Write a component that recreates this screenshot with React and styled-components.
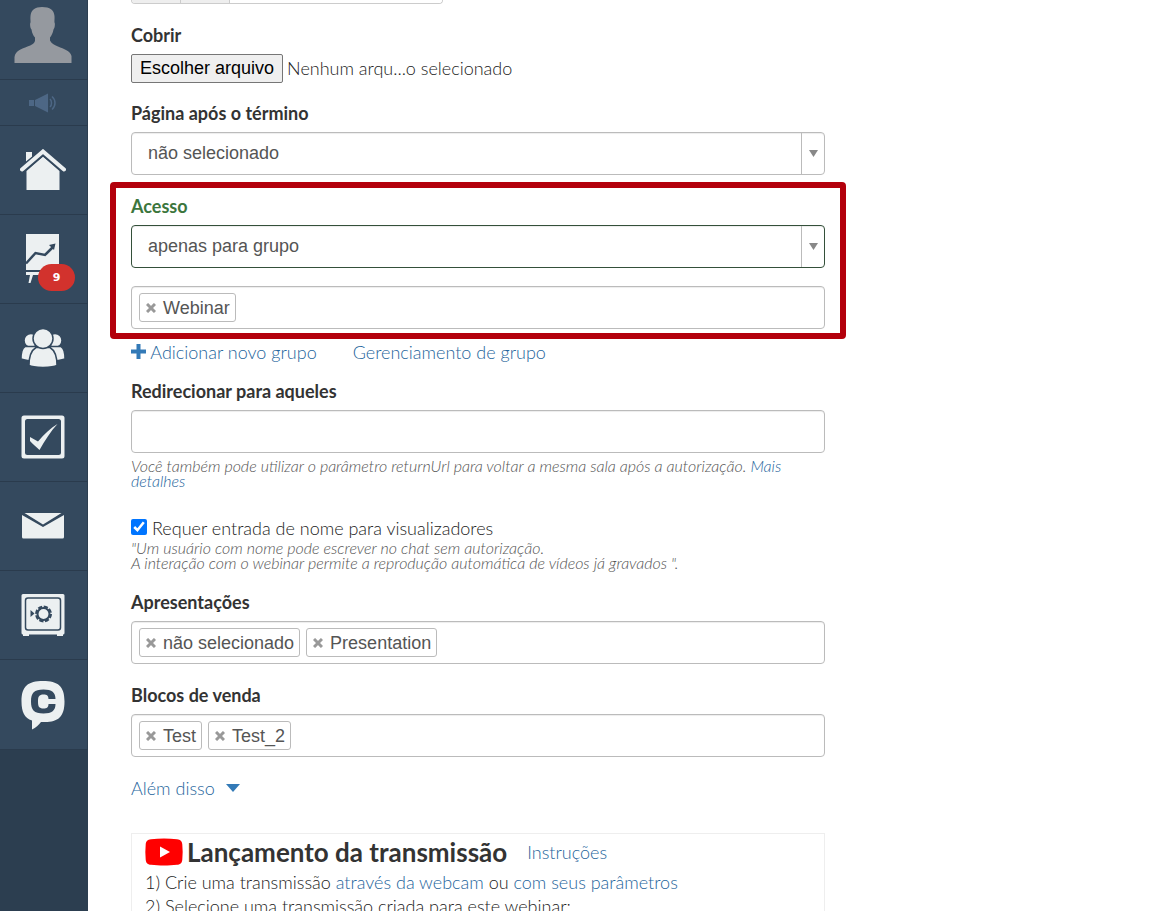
import { useRef, useState } from "react";
import styled, { createGlobalStyle } from "styled-components";

const GlobalStyle = createGlobalStyle`
  * {
    box-sizing: border-box;
  }

  body {
    margin: 0;
    background-color: #fff;
    color: #222;
    font-family: Lato, "Open Sans", sans-serif;
    font-size: 18px;
    font-weight: 300;
    line-height: 24px;
  }
`;

const AvatarIcon = () => (
  <svg width="58" height="58" viewBox="0 0 58 58" fill="#95999f">
    <path d="M28 1c8 0 12 3 12.500 9 .2 3-.2 5 0 6.500.8 1 .4 5.500-1 7-.6 3.500-2 6-3.500 8v3c1.500 3 4 4.500 8 6 6 2.500 12 4 13.500 9.500L57.500 57H.5v-6c1-6.500 7-8 13-10.500 4-1.500 6.500-2.500 7.500-5.500v-3.500c-1.800-2-3-4.500-3.500-8-1.400-1.500-1.800-6-1-7 .2-1.500-.3-3.500 0-6.500C17 4 21 1 28 1z" />
  </svg>
);

const MegaphoneIcon = () => (
  <svg width="28" height="20" viewBox="0 0 28 20" fill="#4d6785">
    <path d="M0 7h5v6H0zM6 7l13-6.500v19L6 13z" />
    <path
      d="M21 6c2 2 2 6 0 8M23 3.500c4 3.500 4 9.500 0 13"
      fill="none"
      stroke="#4d6785"
      strokeWidth="1.500"
    />
  </svg>
);

const HomeIcon = () => (
  <svg width="46" height="42" viewBox="0 0 46 42" fill="#ecf0f1">
    <path d="M6 3h6v5l-6 5z" />
    <path d="M23 7.500 39.500 22v19H6.500V22z" />
    <path
      d="M2 20.500 23 3l21 17.500"
      fill="none"
      stroke="#34495e"
      strokeWidth="7"
    />
    <path
      d="M2 20.500 23 2.500l21 18"
      fill="none"
      stroke="#ecf0f1"
      strokeWidth="4"
      strokeLinecap="round"
    />
  </svg>
);

const ChartIcon = () => (
  <svg width="34" height="50" viewBox="0 0 34 50" fill="#ecf0f1">
    <path d="M0 0h33v36H0zM0 38h33v3H0zM4 41h3L4.500 49h-2z" />
    <path
      d="M0 29.500 9.500 19l9.500 2 8-8"
      fill="none"
      stroke="#34495e"
      strokeWidth="2.500"
    />
    <path d="m29.500 9.500-1.500 6.500-5-5z" fill="#34495e" />
  </svg>
);

const UsersIcon = () => (
  <svg
    width="46"
    height="40"
    viewBox="0 0 46 40"
    fill="#ecf0f1"
    stroke="#34495e"
    strokeWidth="1.500"
  >
    <circle cx="11" cy="12.500" r="7" />
    <circle cx="35" cy="12.500" r="7" />
    <path d="M1 31c0-6 1-11 4-12.500h11V33C10 33 5 32.500 1 31zM45 31c0-6-1-11-4-12.500H30V33c6 0 11-.5 15-2z" />
    <path d="M9 37.500c0-8 2-15 7-18h14c5 3 7 10 7 18-4 2.500-24 2.500-28 0z" />
    <circle cx="23" cy="10.500" r="10" />
  </svg>
);

const CheckIcon = () => (
  <svg width="44" height="44" viewBox="0 0 44 44" fill="#ecf0f1">
    <path
      fillRule="evenodd"
      d="M3 .5h38q2.500 0 2.500 2.500v38q0 2.500-2.500 2.500H3Q.5 43.500.5 41V3Q.5.5 3 .5zM6.500 4Q4 4 4 6.500v31Q4 40 6.500 40h31q2.500 0 2.500-2.500v-31Q40 4 37.500 4z"
    />
    <path d="m9 22 8 4.500C23 19 30 13 36.500 9 30 16 24 25 18.500 35 15.500 32 11.500 29 9 26z" />
  </svg>
);

const MailIcon = () => (
  <svg width="42" height="26" viewBox="0 0 42 26" fill="#ecf0f1">
    <path d="M2.500 0h37L21 11.500zM0 2 21 14 42 2V24q0 1.500-1.500 1.500h-39Q0 25.500 0 24z" />
  </svg>
);

const SafeIcon = () => (
  <svg width="44" height="44" viewBox="0 0 44 44">
    <path
      d="M2 1h40q1.500 0 1.500 1.500V40q0 1.500-1.500 1.500V43h-6v-1.500H8V43H2v-1.500Q.5 41.500.5 40V2.500Q.5 1 2 1z"
      fill="#ecf0f1"
    />
    <rect
      x="4.500"
      y="5"
      width="35"
      height="32"
      rx="2.500"
      fill="none"
      stroke="#34495e"
      strokeWidth="1.500"
    />
    <path d="m9.500 17 4 3.500-4 3.500z" fill="#34495e" />
    <circle
      cx="22.500"
      cy="21"
      r="6"
      fill="none"
      stroke="#34495e"
      strokeWidth="2"
    />
    <circle
      cx="22.500"
      cy="21"
      r="7"
      fill="none"
      stroke="#34495e"
      strokeWidth="3"
      strokeDasharray="4 1.500"
    />
  </svg>
);

const ChatIcon = () => (
  <svg width="44" height="50" viewBox="0 0 44 50">
    <path
      d="M22 1c15 0 21.500 5 21.500 20.500S37 42 24 42h-4c-2.500 3-5 5.500-9 7.500v-9C3.500 38 .5 32 .5 21.500.5 6 7 1 22 1z"
      fill="#ecf0f1"
    />
    <path
      d="M34.500 19h-7c0-3.200-1.500-4.500-5-4.500-4.500 0-5.500 2-5.500 7s1 7 5.500 7c3.500 0 5-1.300 5-4.500h7c0 6.500-3.500 9.500-12 9.500-9.500 0-12.500-3.500-12.500-12s3-12 12.500-12c8.500 0 12 3 12 9.500z"
      fill="#34495e"
    />
  </svg>
);

const YoutubeIcon = () => (
  <svg width="38" height="28" viewBox="0 0 38 28">
    <path
      d="M6 1.200C14 .3 24 .3 32 1.200c3.500.3 5 1.800 5.300 5.300.5 5 .5 10 0 15-.3 3.500-1.800 5-5.300 5.300-8 .9-18 .9-26 0-3.500-.3-5-1.800-5.300-5.300-.5-5-.5-10 0-15C1 3 2.500 1.500 6 1.200z"
      fill="#f00"
    />
    <path d="M15 8.500 25 14l-10 5.500z" fill="#fff" />
  </svg>
);

const PlusIcon = () => (
  <svg width="15" height="15" viewBox="0 0 15 15" fill="#337ab7">
    <path d="M5.500 0h4v5.500H15v4H9.500V15h-4V9.500H0v-4h5.500z" />
  </svg>
);

const CrossIcon = () => (
  <svg width="10" height="10" viewBox="0 0 10 10">
    <path d="m1 1 8 8M9 1 1 9" stroke="#999" strokeWidth="3" />
  </svg>
);

const DownIcon = ({ width, height, color }) => (
  <svg
    width={width}
    height={height}
    viewBox="0 0 14 8"
    preserveAspectRatio="none"
    fill={color}
  >
    <path d="M0 0h14L7 8z" />
  </svg>
);

const menu = [
  { label: "Início", icon: <HomeIcon /> },
  { label: "Tráfego", icon: <ChartIcon />, badge: 9 },
  { label: "Usuários", icon: <UsersIcon /> },
  { label: "Tarefas", icon: <CheckIcon /> },
  { label: "Mensagens", icon: <MailIcon /> },
  { label: "Vendas", icon: <SafeIcon /> },
  { label: "Chat", icon: <ChatIcon /> },
];

const SelectField = ({ id, options, success }) => (
  <SelectBox>
    <Select id={id} $success={success}>
      {options.map((option) => (
        <option key={option}>{option}</option>
      ))}
    </Select>
    <SelectArrow>
      <DownIcon width={9} height={7} color="#888" />
    </SelectArrow>
  </SelectBox>
);

const TagField = ({ label, initial }) => {
  const [tags, setTags] = useState(initial);

  return (
    <TagBox>
      {tags.map((tag) => (
        <Tag key={tag}>
          <TagRemove
            type="button"
            aria-label={`Remover ${tag}`}
            onClick={() => setTags(tags.filter((t) => t !== tag))}
          >
            <CrossIcon />
          </TagRemove>
          {tag}
        </Tag>
      ))}
      <TagInput type="text" aria-label={label} />
    </TagBox>
  );
};

const App = () => {
  const fileRef = useRef(null);
  const [named, setNamed] = useState(true);

  return (
    <>
      <GlobalStyle />
      <Page>
        <Sidebar>
          <MenuLink href="#perfil" aria-label="Perfil" $height={80} $top>
            <AvatarIcon />
          </MenuLink>
          <MenuLink href="#avisos" aria-label="Avisos" $height={46}>
            <MegaphoneIcon />
          </MenuLink>
          {menu.map(({ label, icon, badge }) => (
            <MenuLink key={label} href="#menu" aria-label={label} $height={89}>
              {icon}
              {badge && <Badge>{badge}</Badge>}
            </MenuLink>
          ))}
        </Sidebar>

        <Form>
          <InputGroup>
            <Addon />
            <Addon />
            <GroupInput type="text" aria-label="Duração" />
          </InputGroup>

          <Field>
            <Label htmlFor="cover">Cobrir</Label>
            <FileRow>
              <HiddenFile id="cover" type="file" ref={fileRef} tabIndex={-1} />
              <FileButton type="button" onClick={() => fileRef.current.click()}>
                Escolher arquivo
              </FileButton>
              <span>Nenhum arqu...o selecionado</span>
            </FileRow>
          </Field>

          <Field>
            <Label htmlFor="after">Página após o término</Label>
            <SelectField id="after" options={["não selecionado"]} />
          </Field>

          <Highlight>
            <Label htmlFor="access" $success>
              Acesso
            </Label>
            <SelectField id="access" options={["apenas para grupo"]} success />
            <TagField label="Grupos" initial={["Webinar"]} />
          </Highlight>

          <Links>
            <Link href="#novo">
              <PlusIcon /> Adicionar novo grupo
            </Link>
            <Link href="#grupos">Gerenciamento de grupo</Link>
          </Links>

          <Field>
            <Label htmlFor="redirect">Redirecionar para aqueles</Label>
            <TextInput id="redirect" type="text" />
            <Hint>
              Você também pode utilizar o parâmetro returnUrl para voltar a
              mesma sala após a autorização. <a href="#mais">Mais detalhes</a>
            </Hint>
          </Field>

          <CheckField>
            <CheckLabel>
              <Checkbox
                type="checkbox"
                checked={named}
                onChange={(e) => setNamed(e.target.checked)}
              />
              Requer entrada de nome para visualizadores
            </CheckLabel>
            <Hint as="div">
              "Um usuário com nome pode escrever no chat sem autorização.
              <br />A interação com o webinar permite a reprodução automática de
              vídeos já gravados ".
            </Hint>
          </CheckField>

          <Field>
            <Label as="div">Apresentações</Label>
            <TagField
              label="Apresentações"
              initial={["não selecionado", "Presentation"]}
            />
          </Field>

          <Field>
            <Label as="div">Blocos de venda</Label>
            <TagField label="Blocos de venda" initial={["Test", "Test_2"]} />
          </Field>

          <MoreLink href="#alem">
            Além disso <DownIcon width={14} height={8} color="#337ab7" />
          </MoreLink>

          <Card>
            <CardHead>
              <YoutubeIcon />
              <Title>Lançamento da transmissão</Title>
              <Link href="#instrucoes">Instruções</Link>
            </CardHead>
            <Step>
              1) Crie uma transmissão <Link href="#webcam">através da webcam</Link>{" "}
              ou <Link href="#parametros">com seus parâmetros</Link>
            </Step>
            <Step>2) Selecione uma transmissão criada para este webinar:</Step>
          </Card>
        </Form>
      </Page>
    </>
  );
};

export default App;

const Page = styled.div`
  display: flex;
  height: 100vh;
  overflow: hidden;
`;

const Sidebar = styled.nav`
  display: flex;
  flex-direction: column;
  flex: none;
  width: 88px;
  background-color: #2c3e50;
`;

const MenuLink = styled.a`
  position: relative;
  display: flex;
  align-items: ${(p) => (p.$top ? "flex-start" : "center")};
  justify-content: center;
  height: ${(p) => p.$height}px;
  padding: ${(p) => (p.$top ? 6 : 0)}px 1px 0 0;
  border-right: 1px solid #2c3e50;
  border-bottom: 1px solid #2a3b4d;
  background-color: #34495e;

  &:last-child {
    height: 90px;
  }
`;

const Badge = styled.span`
  position: absolute;
  right: 12px;
  bottom: 12px;
  width: 37px;
  border-radius: 14px;
  background-color: #d2322d;
  color: #fff;
  font-family: "DejaVu Sans", sans-serif;
  font-size: 11px;
  font-weight: 700;
  line-height: 27px;
  text-align: center;
`;

const Form = styled.form`
  flex: 1;
  max-width: 737px;
  padding-left: 43px;
`;

const InputGroup = styled.div`
  display: flex;
  width: 312px;
  height: 4px;
  border: 1px solid #ccc;
  border-top: 0;
  border-radius: 0 0 4px 4px;
  overflow: hidden;
`;

const Addon = styled.span`
  width: 49px;
  border-right: 1px solid #ccc;
  background-color: #eee;
`;

const GroupInput = styled.input`
  flex: 1;
  min-width: 0;
  padding: 0;
  border: 0;
`;

const Field = styled.div`
  display: flex;
  flex-direction: column;
  margin-top: 19px;
`;

const Label = styled.label`
  margin-bottom: 7px;
  color: ${(p) => (p.$success ? "#3c763d" : "#333")};
  font-weight: 700;
`;

const FileRow = styled.div`
  display: flex;
  align-items: center;
  gap: 4px;
  height: 28px;
`;

const HiddenFile = styled.input`
  display: none;
`;

const FileButton = styled.button`
  height: 29px;
  padding: 0 8px;
  border: 1px solid #767676;
  border-radius: 2px;
  background-color: #efefef;
  color: #000;
  font-family: "Liberation Sans", sans-serif;
  font-size: 18px;
`;

const SelectBox = styled.div`
  position: relative;
`;

const Select = styled.select`
  display: block;
  width: 100%;
  height: 43px;
  padding: 0 40px 2px 16px;
  border: 1px solid ${(p) => (p.$success ? "#34503a" : "#bbb")};
  border-radius: 4px;
  background-color: #fff;
  box-shadow: inset 0 1px 1px rgba(0, 0, 0, 0.075);
  color: #555;
  font-family: "Liberation Sans", sans-serif;
  font-size: 18px;
  appearance: none;
`;

const SelectArrow = styled.span`
  position: absolute;
  top: 1px;
  right: 1px;
  bottom: 1px;
  display: flex;
  align-items: center;
  justify-content: center;
  width: 23px;
  border-left: 1px solid #bbb;
  pointer-events: none;
`;

const TagBox = styled.div`
  display: flex;
  align-items: center;
  gap: 6px;
  height: 43px;
  padding: 0 7px;
  border: 1px solid #bbb;
  border-radius: 4px;
  box-shadow: inset 0 1px 1px rgba(0, 0, 0, 0.075);
`;

const Tag = styled.span`
  display: flex;
  align-items: center;
  gap: 7px;
  height: 29px;
  padding: 0 5px 0 6px;
  border: 1px solid #bbb;
  border-radius: 3px;
  color: #555;
  font-family: "Liberation Sans", sans-serif;
  font-weight: 400;
  white-space: nowrap;
`;

const TagRemove = styled.button`
  display: flex;
  padding: 0;
  border: 0;
  background: none;
  cursor: pointer;
`;

const TagInput = styled.input`
  flex: 1;
  min-width: 0;
  border: 0;
  outline: 0;
`;

const Highlight = styled.section`
  margin: 7px -21px 0;
  padding: 6px 15px 4px;
  display: flex;
  flex-direction: column;
  border: 6px solid #b3000c;
  border-radius: 4px;

  ${SelectBox} {
    margin-bottom: 18px;
  }
`;

const Links = styled.div`
  display: flex;
  gap: 36px;
  margin: 1px 0 -4px;
`;

const Link = styled.a`
  color: #25659c;
  text-decoration: none;
`;

const TextInput = styled.input`
  height: 43px;
  padding: 6px 12px;
  border: 1px solid #bbb;
  border-radius: 4px;
  box-shadow: inset 0 1px 1px rgba(0, 0, 0, 0.075);
  font-size: 18px;
`;

const Hint = styled.p`
  margin: 5px 0 0;
  color: #555;
  font-size: 16px;
  font-style: italic;
  line-height: 15px;

  a {
    color: #25659c;
    text-decoration: none;
  }
`;

const CheckField = styled.div`
  margin: 28px 0 20px;

  ${Hint} {
    margin-top: 0;
  }
`;

const CheckLabel = styled.label`
  display: flex;
  align-items: center;
  gap: 5px;
`;

const Checkbox = styled.input`
  width: 16px;
  height: 16px;
  margin: 0 0 3px;
`;

const MoreLink = styled(Link)`
  display: flex;
  align-items: center;
  gap: 11px;
  margin: 19px 0 33px;
`;

const Card = styled.section`
  padding: 2px 13px;
  border: 1px solid #eee;
`;

const CardHead = styled.div`
  display: flex;
  align-items: center;
  gap: 4px;
  height: 32px;
  margin-bottom: 2px;
`;

const Title = styled.h2`
  margin: 0 16px 0 0;
  font-size: 26px;
  font-weight: 700;
  line-height: 32px;
  color: #333;
`;

const Step = styled.p`
  margin: 0;
`;
